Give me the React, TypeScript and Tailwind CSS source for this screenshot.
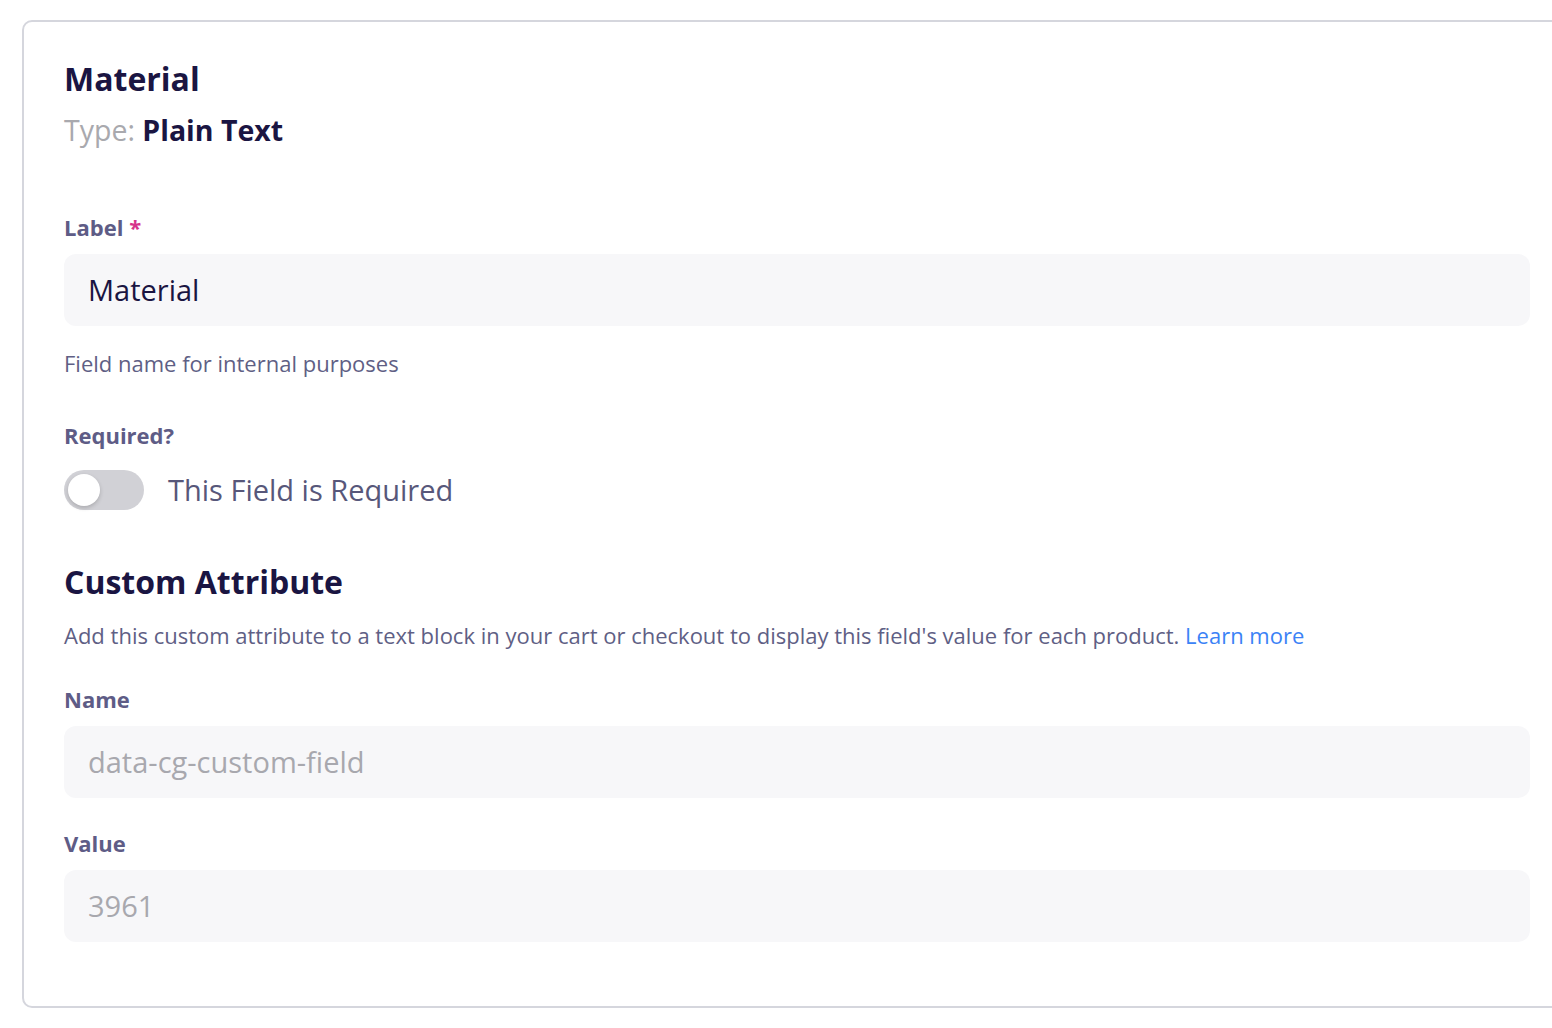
import React from "react";

const font = { fontFamily: "'Open Sans', 'Noto Sans', sans-serif" };

function FieldLabel({ children, required }: { children: React.ReactNode; required?: boolean }) {
  return (
    <div className="text-[22px] font-bold leading-[28px] text-[#5e5c86]">
      {children}
      {required && <span className="ml-[6px] text-[#d6338a]">*</span>}
    </div>
  );
}

function TextBox({ value, muted }: { value: string; muted?: boolean }) {
  return (
    <div
      className={
        "mt-[13px] flex h-[72px] items-center rounded-[12px] bg-[#f7f7f9] px-6 text-[29px] " +
        (muted ? "text-[#a8a8ae]" : "text-[#1a1542]")
      }
    >
      {value}
    </div>
  );
}

function Toggle({ on }: { on: boolean }) {
  return (
    <div
      className={
        "relative h-[40px] w-[80px] shrink-0 rounded-full " + (on ? "bg-[#5a4bd1]" : "bg-[#d1d1d6]")
      }
    >
      <div
        className={
          "absolute top-[4px] h-[32px] w-[32px] rounded-full bg-white shadow-[0_2px_4px_rgba(0,0,0,0.18)] " +
          (on ? "left-[44px]" : "left-[4px]")
        }
      />
    </div>
  );
}

export default function App() {
  return (
    <div className="h-[1028px] w-[1552px] overflow-hidden bg-white pl-[22px] pt-[20px]" style={font}>
      <div className="w-[1550px] shrink-0 rounded-[10px] border-2 border-[#d5d6dd] px-[40px] pb-[64px] pt-[37px]">
        <h1 className="text-[32px] font-bold leading-[40px] text-[#1a1542]">Material</h1>
        <div className="mt-[15px] text-[28.5px] leading-[32px]">
          <span className="text-[#a9a9ae]">Type: </span>
          <span className="font-bold text-[#1a1542]">Plain Text</span>
        </div>

        <div className="mt-[67px]">
          <FieldLabel required>Label</FieldLabel>
          <TextBox value="Material" />
          <p className="mt-[23px] text-[22px] leading-[28px] text-[#5f5f85]">Field name for internal purposes</p>
        </div>

        <div className="mt-[44px]">
          <FieldLabel>Required?</FieldLabel>
          <div className="mt-[21px] flex items-center gap-6">
            <Toggle on={false} />
            <span className="text-[29px] leading-[40px] text-[#57577a]">This Field is Required</span>
          </div>
        </div>

        <h2 className="mt-[52px] text-[32px] font-bold leading-[40px] text-[#1a1542]">Custom Attribute</h2>
        <p className="mt-[19px] text-[22px] leading-[28px] text-[#5f5f85]">
          Add this custom attribute to a text block in your cart or checkout to display this field's value for each
          product. <span className="text-[#3b82f6]">Learn more</span>
        </p>

        <div className="mt-[36px]">
          <FieldLabel>Name</FieldLabel>
          <TextBox value="data-cg-custom-field" muted />
        </div>

        <div className="mt-[31px]">
          <FieldLabel>Value</FieldLabel>
          <TextBox value="3961" muted />
        </div>
      </div>
    </div>
  );
}
